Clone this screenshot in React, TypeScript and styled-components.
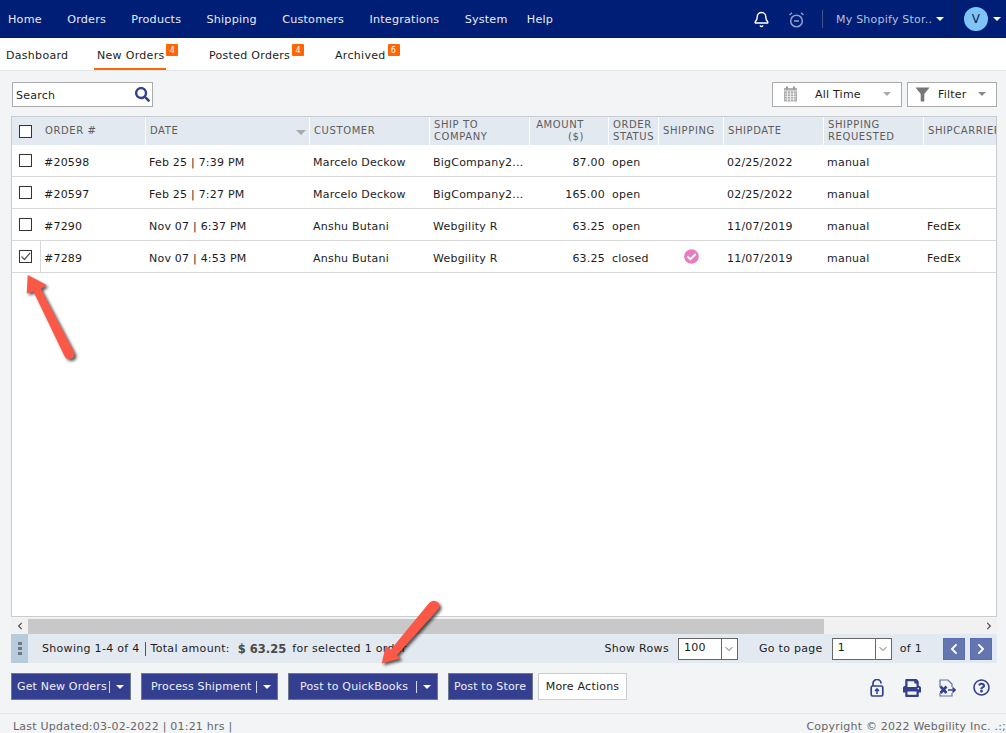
import { FaPrint, FaRegQuestionCircle, FaSearch, FaCheckCircle, FaChevronLeft, FaChevronRight } from "react-icons/fa";
import { Bell, ChevronDown } from "lucide-react";
import styled, { createGlobalStyle } from "styled-components";

const GlobalStyle = createGlobalStyle`
  html, body {
    margin: 0;
    padding: 0;
    overflow: hidden;
  }
  * {
    box-sizing: border-box;
  }
`;

const Page = styled.div`
  position: relative;
  display: flex;
  flex-direction: column;
  width: 1006px;
  height: 733px;
  overflow: hidden;
  background: #f3f4f6;
  color: #1c1c1c;
  font-family: "DejaVu Sans", Verdana, sans-serif;
  font-size: 11px;
  letter-spacing: 0.22px;
`;

const TopBar = styled.header`
  display: flex;
  align-items: center;
  flex: 0 0 38px;
  padding-left: 8px;
  background: #001e75;
  color: #e8ecf6;
`;
const NavMenu = styled.nav`
  display: flex;
  gap: 25.3px;
  flex: 1;
  font-size: 11.2px;
  letter-spacing: 0.2px;
`;
const HelpItem = styled.span`
  margin-left: -6px;
`;
const TopRight = styled.div`
  display: flex;
  align-items: center;
  height: 38px;
`;
const BellIcon = styled(Bell)`
  color: #fff;
  margin-right: 18px;
`;
const AlarmIcon = styled.svg`
  color: #8c9cc8;
`;
const ThinDivider = styled.span`
  width: 1px;
  height: 18px;
  margin: 0 13px 0 17px;
  background: #40558f;
`;
const StoreName = styled.span`
  width: 100px;
  color: #b5c0dd;
  white-space: nowrap;
`;
const Caret = styled.span<{ $color?: string; $size?: number }>`
  display: inline-block;
  width: 0;
  height: 0;
  border-left: ${(p) => p.$size ?? 4}px solid transparent;
  border-right: ${(p) => p.$size ?? 4}px solid transparent;
  border-top: ${(p) => p.$size ?? 4}px solid ${(p) => p.$color ?? "#fff"};
`;
const UserBox = styled.div`
  display: flex;
  align-items: center;
  gap: 5px;
  height: 38px;
  width: 52px;
  margin-left: 10px;
  padding-left: 9px;
  border-left: 1px solid #0d1d4d;
`;
const Avatar = styled.span`
  display: flex;
  align-items: center;
  justify-content: center;
  width: 24px;
  height: 24px;
  border-radius: 50%;
  background: #7fc4f9;
  color: #10204a;
  font-size: 12px;
`;

const TabBar = styled.div`
  display: flex;
  flex: 0 0 33px;
  padding-left: 6px;
  background: #fff;
  border-bottom: 1px solid #e4e6ea;
  letter-spacing: 0.3px;
`;
const Tab = styled.div<{ $width: number }>`
  display: flex;
  align-items: flex-start;
  width: ${(p) => p.$width}px;
  height: 32px;
  padding-top: 11px;
`;
const TabLabel = styled.span<{ $active?: boolean }>`
  height: 21px;
  padding-right: 2px;
  margin-left: ${(p) => (p.$active ? -3 : 0)}px;
  padding-left: ${(p) => (p.$active ? 3 : 0)}px;
  border-bottom: 2px solid ${(p) => (p.$active ? "#ff6600" : "transparent")};
`;
const TabBadge = styled.span`
  display: flex;
  align-items: center;
  justify-content: center;
  width: 12px;
  height: 12px;
  margin-top: -5px;
  border-radius: 1px;
  background: #ff6600;
  color: #fff;
  font-size: 8px;
`;

const Content = styled.main`
  display: flex;
  flex-direction: column;
  flex: 1;
  min-height: 0;
  padding: 10px 9px 0 11px;
`;
const FilterRow = styled.div`
  display: flex;
  align-items: center;
  justify-content: space-between;
  flex: 0 0 26px;
  margin-bottom: 9px;
`;
const SearchBox = styled.div`
  display: flex;
  align-items: center;
  justify-content: space-between;
  width: 141px;
  height: 25px;
  margin-left: 1px;
  margin-top: 1px;
  padding: 1px 2px 0 3px;
  background: #fff;
  border: 1px solid #aaa;
  svg {
    color: #34408f;
    margin-top: -1px;
  }
`;
const FilterGroup = styled.div`
  display: flex;
  gap: 5px;
`;
const FilterButton = styled.div<{ $width: number; $pad: number }>`
  display: flex;
  align-items: center;
  width: ${(p) => p.$width}px;
  height: 25px;
  padding: 0 10px 0 ${(p) => p.$pad}px;
  background: #fff;
  border: 1px solid #aaa;
`;
const FilterLabel = styled.span<{ $gap: number }>`
  flex: 1;
  margin-left: ${(p) => p.$gap}px;
`;

const TablePanel = styled.div`
  flex: 1;
  min-height: 0;
  background: #fff;
  border: 1px solid #c8cbd0;
  overflow: hidden;
`;
const COLUMNS = "29px 105px 164px 120px 100px 79px 50px 65px 100px 100px 100px";
const HeaderRow = styled.div`
  display: grid;
  grid-template-columns: ${COLUMNS};
  height: 28px;
  background: #e3e9f0;
`;
const HeadCell = styled.div<{ $right?: boolean }>`
  position: relative;
  display: block;
  align-self: stretch;
  padding: ${(p) => (p.$right ? "2px 24px 0 4px" : "2px 4px 0")};
  border-right: 1px solid #fff;
  color: #5c5c5c;
  font-size: 10px;
  letter-spacing: 0.6px;
  line-height: 12px;
  text-align: ${(p) => (p.$right ? "right" : "left")};
  white-space: nowrap;
  overflow: hidden;
`;
const SingleHead = styled(HeadCell)`
  padding-top: 8px;
`;
const SortCaret = styled.span`
  position: absolute;
  right: 3px;
  top: 9px;
`;
const Row = styled.div`
  display: grid;
  grid-template-columns: ${COLUMNS};
  height: 32px;
  border-bottom: 1px solid #d8d8d8;
`;
const Cell = styled.div<{ $right?: boolean; $center?: boolean }>`
  display: flex;
  align-items: center;
  justify-content: ${(p) => (p.$right ? "flex-end" : p.$center ? "center" : "flex-start")};
  padding: 3px ${(p) => (p.$right ? 4 : 3)}px 0 3px;
  white-space: nowrap;
  overflow: hidden;
`;
const CheckCell = styled.div<{ $selected?: boolean }>`
  display: flex;
  align-items: center;
  justify-content: center;
  padding-right: 1px;
  border-right: 1px solid ${(p) => (p.$selected ? "#d8d8d8" : "transparent")};
`;
const Check = styled.span`
  display: flex;
  align-items: center;
  justify-content: center;
  width: 13px;
  height: 13px;
  background: #fff;
  border: 1px solid #333;
`;
const ShipIcon = styled(FaCheckCircle)`
  color: #e87cc0;
  margin-top: -4px;
`;

const ScrollBar = styled.div`
  display: flex;
  align-items: center;
  flex: 0 0 16px;
  margin-top: 1px;
  background: #f1f1f1;
`;
const ScrollEnd = styled.span`
  display: flex;
  align-items: center;
  justify-content: center;
  flex: 0 0 17px;
  color: #505050;
`;
const ScrollThumb = styled.div`
  width: 796px;
  height: 15px;
  background: #c8c8c8;
`;
const ScrollTrack = styled.div`
  flex: 1;
`;

const StatusBar = styled.div`
  display: flex;
  align-items: center;
  flex: 0 0 29px;
  padding-right: 5px;
  background: #e3e9f0;
  letter-spacing: 0.3px;
`;
const Grip = styled.div`
  display: flex;
  flex-direction: column;
  align-items: center;
  justify-content: center;
  gap: 2px;
  width: 17px;
  height: 29px;
  margin-right: 14px;
  background: #b8cbdd;
  i {
    width: 4px;
    height: 3px;
    background: #6f7780;
  }
`;
const StatusDivider = styled.span`
  width: 1px;
  height: 14px;
  margin: 0 5px;
  background: #555;
`;
const Total = styled.strong`
  margin: 0 6px 0 8px;
  color: #4a4a4a;
  font-size: 11.5px;
  letter-spacing: 0;
`;
const Pager = styled.div`
  display: flex;
  align-items: center;
  margin-left: auto;
`;
const PagerLabel = styled.span<{ $before?: number }>`
  margin-left: ${(p) => p.$before ?? 0}px;
  margin-right: 9px;
`;
const PageCount = styled.span`
  margin-left: 8px;
`;
const SelectBox = styled.div`
  display: flex;
  align-items: stretch;
  width: 60px;
  height: 22px;
  background: #fff;
  border: 1px solid #666;
  span {
    flex: 1;
    padding: 2px 0 0 5px;
  }
  div {
    display: flex;
    align-items: center;
    justify-content: center;
    width: 16px;
    border-left: 1px solid #666;
    color: #666;
  }
`;
const PageButton = styled.button<{ $first?: boolean }>`
  display: flex;
  align-items: center;
  justify-content: center;
  width: 22px;
  height: 22px;
  margin-left: ${(p) => (p.$first ? 21 : 5)}px;
  padding: 0;
  background: #6376b0;
  border: 1px solid #5a6cb8;
  color: #fff;
`;

const ActionBar = styled.div`
  display: flex;
  align-items: flex-start;
  flex: 0 0 50px;
  padding-top: 10px;
`;
const ActionButton = styled.div<{ $width: number; $gap?: number }>`
  display: flex;
  align-items: center;
  justify-content: space-between;
  width: ${(p) => p.$width}px;
  height: 27px;
  margin-right: ${(p) => p.$gap ?? 10}px;
  padding: 0 6px 0 5px;
  background: #343f8f;
  border: 1px solid #6d7a8c;
  color: #eef0f8;
  letter-spacing: 0.16px;
  white-space: nowrap;
`;
const ActionLabel = styled.span<{ $indent?: number }>`
  margin-left: ${(p) => p.$indent ?? 0}px;
`;
const SplitPart = styled.span`
  display: flex;
  align-items: center;
  gap: 6px;
  i {
    width: 1px;
    height: 12px;
    background: #d5d8ea;
  }
`;
const MoreButton = styled.div`
  display: flex;
  align-items: center;
  justify-content: center;
  width: 89px;
  height: 27px;
  background: #fff;
  border: 1px solid #ccc;
`;
const ToolIcons = styled.div`
  display: flex;
  align-items: center;
  gap: 17px;
  height: 27px;
  margin-left: auto;
  margin-right: 7px;
  margin-top: 1px;
  color: #34408f;
`;
const LockIcon = styled.svg`
  margin-right: 2px;
`;

const Footer = styled.footer`
  display: flex;
  align-items: flex-start;
  justify-content: space-between;
  flex: 0 0 20px;
  padding: 6px 0 0 13px;
  border-top: 1px solid #e4e6ea;
  color: #666;
`;
const Arrows = styled.svg`
  position: absolute;
  left: 0;
  top: 0;
  pointer-events: none;
  path {
    fill: #fb5848;
    filter: drop-shadow(2px 2px 1.5px rgba(0, 0, 0, 0.65));
  }
`;

const rows = [
  { no: "#20598", date: "Feb 25 | 7:39 PM", name: "Marcelo Deckow", ship: "BigCompany2...", amount: "87.00", status: "open", shipDate: "02/25/2022", carrier: "" },
  { no: "#20597", date: "Feb 25 | 7:27 PM", name: "Marcelo Deckow", ship: "BigCompany2...", amount: "165.00", status: "open", shipDate: "02/25/2022", carrier: "" },
  { no: "#7290", date: "Nov 07 | 6:37 PM", name: "Anshu Butani", ship: "Webgility R", amount: "63.25", status: "open", shipDate: "11/07/2019", carrier: "FedEx" },
  { no: "#7289", date: "Nov 07 | 4:53 PM", name: "Anshu Butani", ship: "Webgility R", amount: "63.25", status: "closed", shipDate: "11/07/2019", carrier: "FedEx", selected: true },
];

const nav = ["Home", "Orders", "Products", "Shipping", "Customers", "Integrations", "System"];

const CalendarIcon = () => (
  <svg width="15" height="16" viewBox="0 0 15 16">
    <path d="M1 2 H14 V15.5 H1 Z" fill="#b0b0b0" />
    <rect x="3" y="0.5" width="2" height="3" fill="#999" />
    <rect x="10" y="0.5" width="2" height="3" fill="#999" />
    <path d="M1 5 H14 M2 8 H13 M2 10.5 H13 M2 13 H13 M4.5 5 V15 M7.5 5 V15 M10.5 5 V15" stroke="#f1f1f1" strokeWidth="0.8" fill="none" />
  </svg>
);

const FunnelIcon = () => (
  <svg width="15" height="15" viewBox="0 0 15 15">
    <path d="M0.5 0.5 H14.5 L9.3 7 V14.5 H5.7 V7 Z" fill="#777" />
  </svg>
);

const App = () => {
  return (
    <Page>
      <GlobalStyle />
      <TopBar>
        <NavMenu>
          {nav.map((item) => (
            <span key={item}>{item}</span>
          ))}
          <HelpItem>Help</HelpItem>
        </NavMenu>
        <TopRight>
          <BellIcon size={17} strokeWidth={2} />
          <AlarmIcon width="17" height="17" viewBox="0 0 17 17" fill="none" stroke="currentColor">
            <circle cx="8.5" cy="10" r="5.8" strokeWidth="1.6" />
            <path d="M6 10 H11" strokeWidth="1.6" />
            <path d="M1.5 4 L4 1.8 M15.5 4 L13 1.8" strokeWidth="1.5" />
          </AlarmIcon>
          <ThinDivider />
          <StoreName>My Shopify Stor..</StoreName>
          <Caret />
          <UserBox>
            <Avatar>V</Avatar>
            <Caret />
          </UserBox>
        </TopRight>
      </TopBar>

      <TabBar>
        <Tab $width={91}>Dashboard</Tab>
        <Tab $width={112}>
          <TabLabel $active>New Orders</TabLabel>
          <TabBadge>4</TabBadge>
        </Tab>
        <Tab $width={126}>
          <TabLabel>Posted Orders</TabLabel>
          <TabBadge>4</TabBadge>
        </Tab>
        <Tab $width={100}>
          <TabLabel>Archived</TabLabel>
          <TabBadge>6</TabBadge>
        </Tab>
      </TabBar>

      <Content>
        <FilterRow>
          <SearchBox>
            Search
            <FaSearch size={15} />
          </SearchBox>
          <FilterGroup>
            <FilterButton $width={130} $pad={10}>
              <CalendarIcon />
              <FilterLabel $gap={17}>All Time</FilterLabel>
              <Caret $color="#aaa" />
            </FilterButton>
            <FilterButton $width={90} $pad={7}>
              <FunnelIcon />
              <FilterLabel $gap={8}>Filter</FilterLabel>
              <Caret $color="#888" />
            </FilterButton>
          </FilterGroup>
        </FilterRow>

        <TablePanel>
          <HeaderRow>
            <CheckCell>
              <Check />
            </CheckCell>
            <SingleHead>ORDER #</SingleHead>
            <SingleHead>
              DATE
              <SortCaret>
                <Caret $color="#aaa" $size={5} />
              </SortCaret>
            </SingleHead>
            <SingleHead>CUSTOMER</SingleHead>
            <HeadCell>
              SHIP TO
              <br />
              COMPANY
            </HeadCell>
            <HeadCell $right>
              AMOUNT
              <br />
              ($)
            </HeadCell>
            <HeadCell>
              ORDER
              <br />
              STATUS
            </HeadCell>
            <SingleHead>SHIPPING</SingleHead>
            <SingleHead>SHIPDATE</SingleHead>
            <HeadCell>
              SHIPPING
              <br />
              REQUESTED
            </HeadCell>
            <SingleHead>SHIPCARRIER</SingleHead>
          </HeaderRow>
          {rows.map((row) => (
            <Row key={row.no}>
              <CheckCell $selected={row.selected}>
                <Check>
                  {row.selected && (
                    <svg width="11" height="11" viewBox="0 0 11 11">
                      <path d="M1.5 5.5 L4.5 8.5 L10 2" fill="none" stroke="#555" strokeWidth="1.2" />
                    </svg>
                  )}
                </Check>
              </CheckCell>
              <Cell>{row.no}</Cell>
              <Cell>{row.date}</Cell>
              <Cell>{row.name}</Cell>
              <Cell>{row.ship}</Cell>
              <Cell $right>{row.amount}</Cell>
              <Cell>{row.status}</Cell>
              <Cell $center>{row.selected && <ShipIcon size={15} />}</Cell>
              <Cell>{row.shipDate}</Cell>
              <Cell>manual</Cell>
              <Cell>{row.carrier}</Cell>
            </Row>
          ))}
        </TablePanel>

        <ScrollBar>
          <ScrollEnd>
            <FaChevronLeft size={8} />
          </ScrollEnd>
          <ScrollThumb />
          <ScrollTrack />
          <ScrollEnd>
            <FaChevronRight size={8} />
          </ScrollEnd>
        </ScrollBar>

        <StatusBar>
          <Grip>
            <i />
            <i />
            <i />
          </Grip>
          <span>Showing 1-4 of 4</span>
          <StatusDivider />
          <span>Total amount:</span>
          <Total>$ 63.25</Total>
          <span>for selected 1 order</span>
          <Pager>
            <PagerLabel>Show Rows</PagerLabel>
            <SelectBox>
              <span>100</span>
              <div>
                <ChevronDown size={12} />
              </div>
            </SelectBox>
            <PagerLabel $before={21}>Go to page</PagerLabel>
            <SelectBox>
              <span>1</span>
              <div>
                <ChevronDown size={12} />
              </div>
            </SelectBox>
            <PageCount>of 1</PageCount>
            <PageButton $first>
              <FaChevronLeft size={12} />
            </PageButton>
            <PageButton>
              <FaChevronRight size={12} />
            </PageButton>
          </Pager>
        </StatusBar>

        <ActionBar>
          <ActionButton $width={120}>
            Get New Orders
            <SplitPart>
              <i />
              <Caret />
            </SplitPart>
          </ActionButton>
          <ActionButton $width={137}>
            <ActionLabel $indent={4}>Process Shipment</ActionLabel>
            <SplitPart>
              <i />
              <Caret />
            </SplitPart>
          </ActionButton>
          <ActionButton $width={150}>
            <ActionLabel $indent={6}>Post to QuickBooks</ActionLabel>
            <SplitPart>
              <i />
              <Caret />
            </SplitPart>
          </ActionButton>
          <ActionButton $width={85} $gap={5}>
            Post to Store
          </ActionButton>
          <MoreButton>More Actions</MoreButton>
          <ToolIcons>
            <LockIcon width="14" height="18" viewBox="0 0 14 18" fill="none" stroke="currentColor" strokeWidth="1.7">
              <path d="M3 7 V4.5 a4 4 0 0 1 8 0" />
              <rect x="1.2" y="7" width="11.6" height="10" rx="1.5" />
              <path d="M7 15 V10 M5 12 L7 9.8 L9 12" strokeWidth="1.5" />
            </LockIcon>
            <FaPrint size={18} />
            <svg width="18" height="18" viewBox="0 0 18 18" fill="none" stroke="currentColor" strokeWidth="1.2">
              <path d="M2 8 V1 H10 L14 5 V8 M14 14 V17 H2 V14" strokeOpacity="0.75" />
              <path d="M2.5 7.5 L8.5 14 M8.5 7.5 L2.5 14" strokeWidth="2.6" />
              <path d="M10 11 H17 M14.5 8.5 L17 11 L14.5 13.5" strokeWidth="1.6" />
            </svg>
            <FaRegQuestionCircle size={17} />
          </ToolIcons>
        </ActionBar>
      </Content>

      <Footer>
        <span>Last Updated:03-02-2022 | 01:21 hrs |</span>
        <span>Copyright © 2022 Webgility Inc. .:;</span>
      </Footer>

      <Arrows width="1006" height="733" viewBox="0 0 1006 733">
        <path d="M27.7 275 L46.5 285 L41 289 L74 352 Q76 358 70 359 Q66 359.5 64.5 356 L33.5 291.5 L26.7 293.5 Z" />
        <path d="M381.7 663.5 L385.7 646 L390.5 650 L429.5 602.5 Q434 599 438 602.5 Q441 606 438 609.5 L397 655 L400.5 658.5 Z" />
      </Arrows>
    </Page>
  );
};

export default App;
